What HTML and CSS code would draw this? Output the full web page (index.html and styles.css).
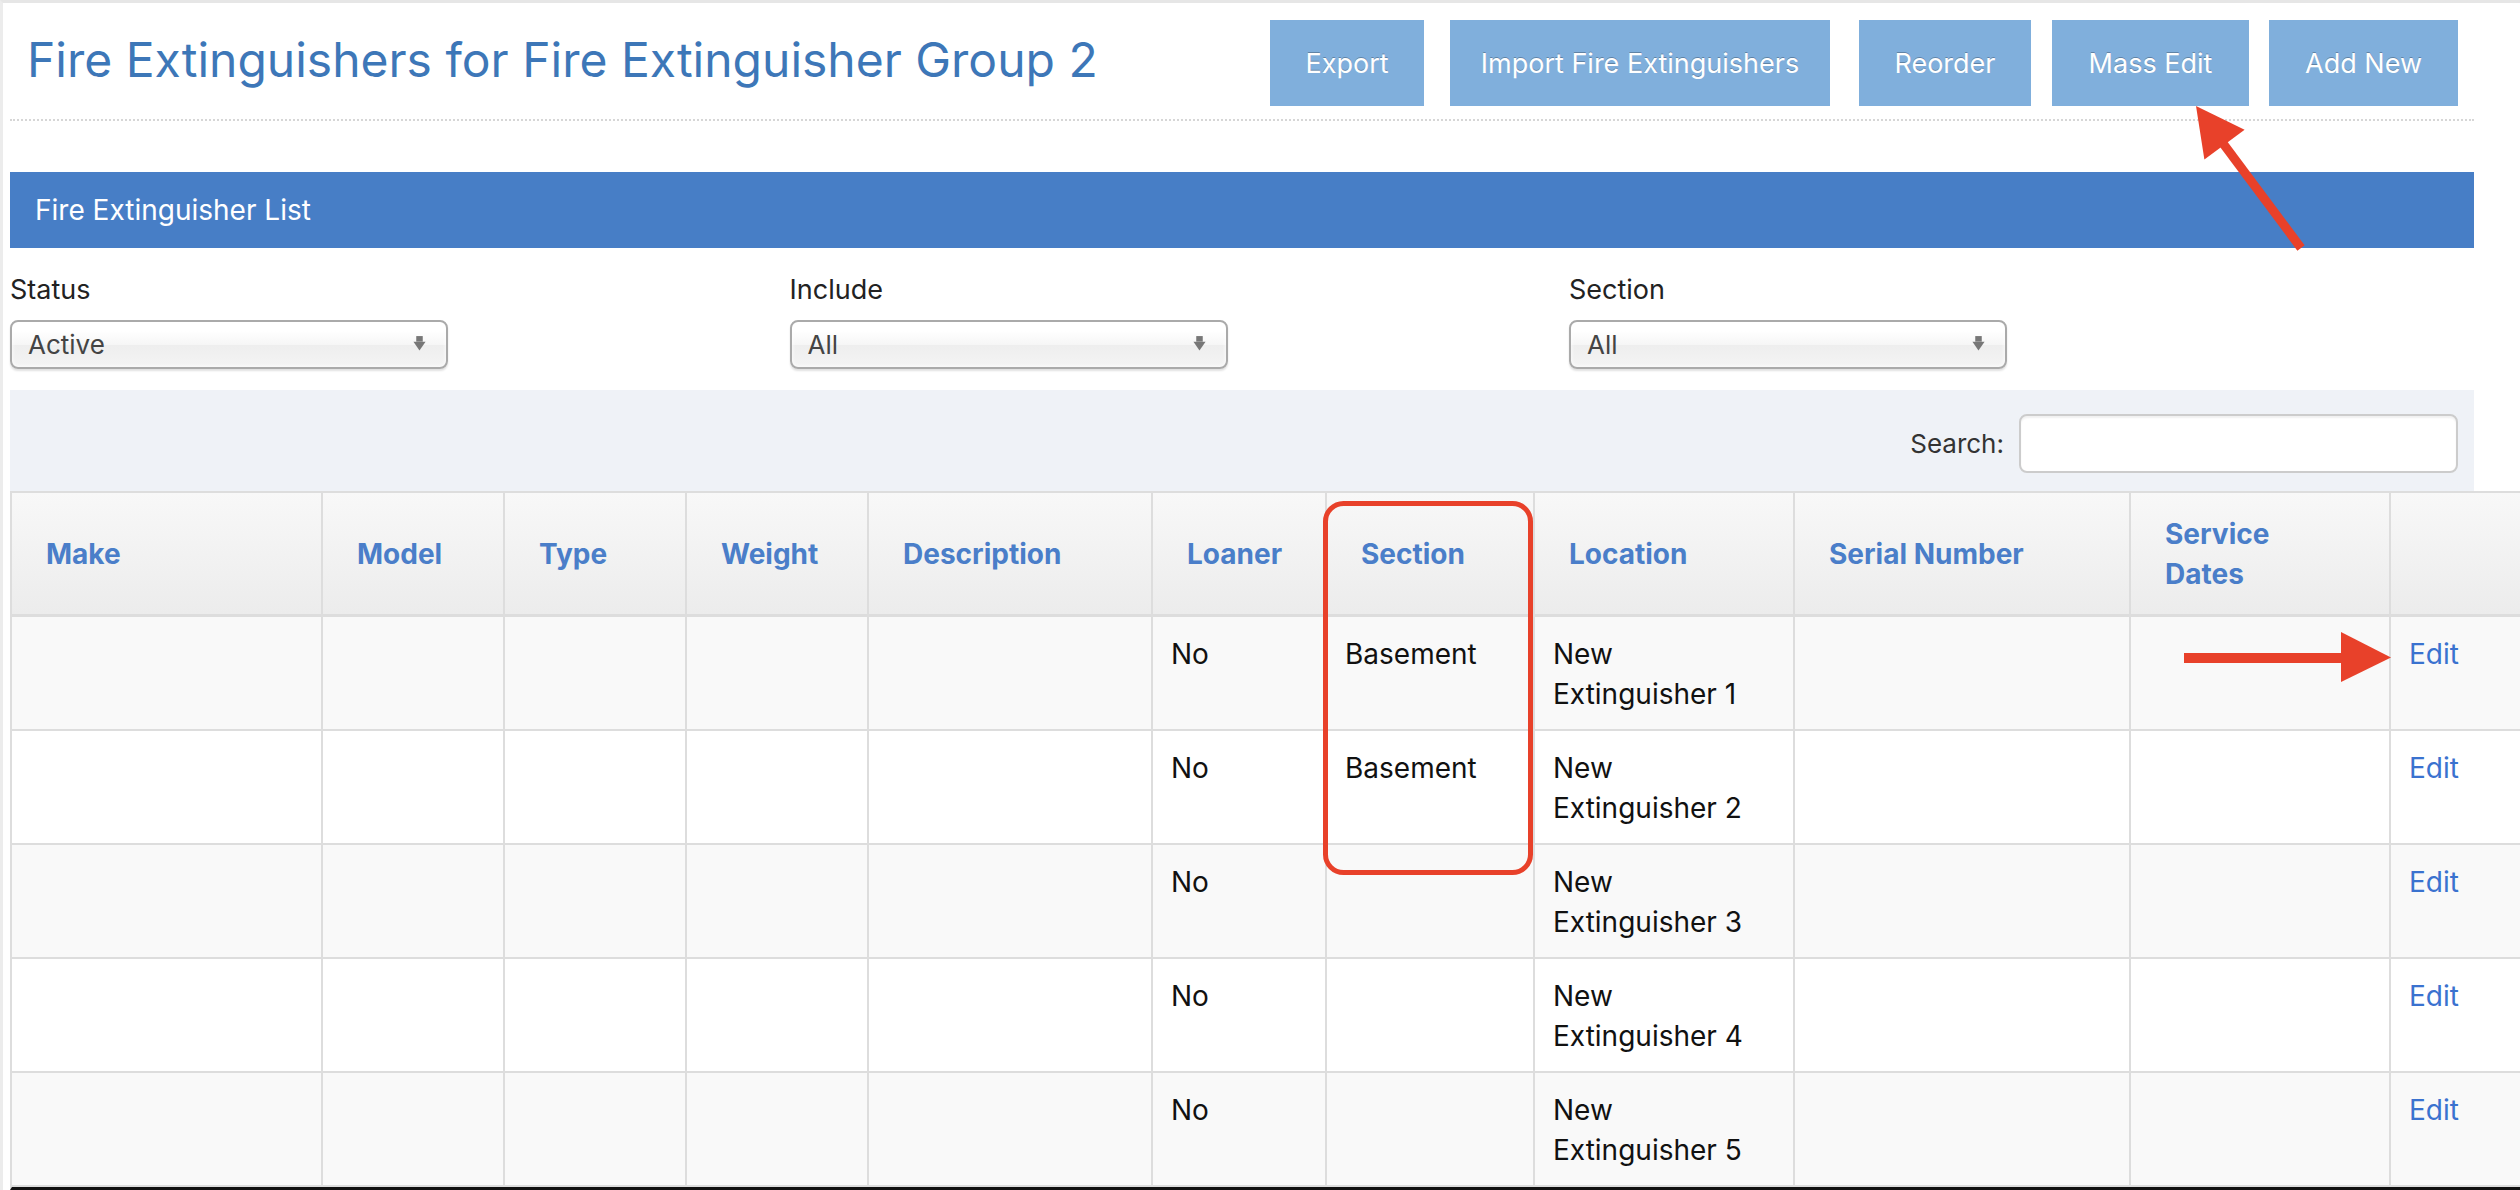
FILE: index.html
```html
<!DOCTYPE html>
<html lang="en">
<head>
<meta charset="utf-8">
<title>Fire Extinguishers</title>
<link rel="stylesheet" href="styles.css">
</head>
<body>
<div class="page">
  <header class="page-header">
    <h1 class="title">Fire Extinguishers for Fire Extinguisher Group 2</h1>
    <div class="actions">
      <a class="btn btn-export">Export</a>
      <a class="btn btn-import">Import Fire Extinguishers</a>
      <a class="btn btn-reorder">Reorder</a>
      <a class="btn btn-mass">Mass Edit</a>
      <a class="btn btn-add">Add New</a>
    </div>
  </header>

  <div class="panel-heading">Fire Extinguisher List</div>

  <div class="filters">
    <div class="filter">
      <label class="filter-label">Status</label>
      <div class="select"><span>Active</span><svg class="select-arrow" viewBox="0 0 14 16"><rect x="3.5" y="0" width="7" height="6" fill="#777"/><path d="M0.5 6 H13.5 L7 15.5 Z" fill="#777"/></svg></div>
    </div>
    <div class="filter">
      <label class="filter-label">Include</label>
      <div class="select"><span>All</span><svg class="select-arrow" viewBox="0 0 14 16"><rect x="3.5" y="0" width="7" height="6" fill="#777"/><path d="M0.5 6 H13.5 L7 15.5 Z" fill="#777"/></svg></div>
    </div>
    <div class="filter">
      <label class="filter-label">Section</label>
      <div class="select"><span>All</span><svg class="select-arrow" viewBox="0 0 14 16"><rect x="3.5" y="0" width="7" height="6" fill="#777"/><path d="M0.5 6 H13.5 L7 15.5 Z" fill="#777"/></svg></div>
    </div>
  </div>

  <div class="search-bar">
    <label class="search-label">Search:</label>
    <input class="search-input" type="text">
  </div>

  <table class="grid">
    <thead>
      <tr>
        <th class="c-make">Make</th>
        <th class="c-model">Model</th>
        <th class="c-type">Type</th>
        <th class="c-weight">Weight</th>
        <th class="c-desc">Description</th>
        <th class="c-loaner">Loaner</th>
        <th class="c-section">Section</th>
        <th class="c-location">Location</th>
        <th class="c-serial">Serial Number</th>
        <th class="c-service th-wrap">Service Dates</th>
        <th class="c-edit"></th>
      </tr>
    </thead>
    <tbody>
      <tr><td></td><td></td><td></td><td></td><td></td><td>No</td><td>Basement</td><td>New Extinguisher 1</td><td></td><td></td><td><a class="edit">Edit</a></td></tr>
      <tr><td></td><td></td><td></td><td></td><td></td><td>No</td><td>Basement</td><td>New Extinguisher 2</td><td></td><td></td><td><a class="edit">Edit</a></td></tr>
      <tr><td></td><td></td><td></td><td></td><td></td><td>No</td><td></td><td>New Extinguisher 3</td><td></td><td></td><td><a class="edit">Edit</a></td></tr>
      <tr><td></td><td></td><td></td><td></td><td></td><td>No</td><td></td><td>New Extinguisher 4</td><td></td><td></td><td><a class="edit">Edit</a></td></tr>
      <tr><td></td><td></td><td></td><td></td><td></td><td>No</td><td></td><td>New Extinguisher 5</td><td></td><td></td><td><a class="edit">Edit</a></td></tr>
    </tbody>
  </table>
</div>

<svg class="annotations" width="2520" height="1190" viewBox="0 0 2520 1190">
  <rect x="1325.5" y="503.5" width="205" height="369" rx="18" ry="18" fill="none" stroke="#e8412a" stroke-width="5"/>
  <line x1="2222" y1="142" x2="2301" y2="248" stroke="#e8412a" stroke-width="9"/>
  <polygon points="2196,106 2244.6,129.8 2204.4,159.5" fill="#e8412a"/>
  <rect x="2184" y="653" width="160" height="10" fill="#e8412a"/>
  <polygon points="2341,632 2391,657.5 2341,682" fill="#e8412a"/>
</svg>
</body>
</html>
```

FILE: styles.css
```css
* { box-sizing: border-box; }

html, body {
  margin: 0;
  padding: 0;
  overflow: hidden;
}

body {
  width: 2520px;
  height: 1190px;
  font-family: Inter, "Noto Sans", "Liberation Sans", sans-serif;
  color: #111;
  background: #fff;
  border-top: 3px solid #e6e6e6;
  border-left: 3px solid #ececec;
}

.page {
  width: 2471px;
  padding-left: 7px;
}

/* ---------- header ---------- */
.page-header {
  display: flex;
  justify-content: space-between;
  align-items: flex-start;
  padding-top: 17px;
  padding-bottom: 13px;
  border-bottom: 2px dotted #d6d6d6;
}

.title {
  margin: 16px 0 0 17px;
  font-size: 48px;
  line-height: 48px;
  font-weight: 400;
  color: #3d77b8;
}

.actions {
  display: flex;
  margin-right: 16px;
}

.btn {
  display: flex;
  align-items: center;
  justify-content: center;
  height: 86px;
  padding: 0;
  background: #80afdc;
  color: #fff;
  font-size: 27px;
  text-shadow: 0 -1px 0 rgba(0, 0, 0, 0.25);
  white-space: nowrap;
}

.btn-export { width: 154px; }
.btn-import { width: 380px; margin-left: 26px; }
.btn-reorder { width: 172px; margin-left: 29px; }
.btn-mass { width: 197px; margin-left: 21px; }
.btn-add { width: 189px; margin-left: 20px; }

/* ---------- panel heading ---------- */
.panel-heading {
  margin-top: 51px;
  height: 76px;
  display: flex;
  align-items: center;
  padding-left: 25px;
  background: #477ec6;
  color: #fff;
  font-size: 28px;
}

/* ---------- filters ---------- */
.filters {
  display: grid;
  grid-template-columns: repeat(3, 779.5px);
  padding-top: 24px;
}

.filter-label {
  display: block;
  font-size: 27px;
  line-height: 36px;
  color: #222;
  margin-bottom: 12px;
}

.select {
  width: 438px;
  height: 49px;
  display: flex;
  align-items: center;
  justify-content: space-between;
  padding: 0 20px 0 16px;
  border: 2px solid #aaa;
  border-radius: 8px;
  background: linear-gradient(#ffffff 20%, #f6f6f6 50%, #eeeeee 52%, #f4f4f4 100%);
  box-shadow: inset 0 0 4px #fff, 0 2px 2px rgba(0, 0, 0, 0.12);
  font-size: 26px;
  color: #444;
}

.select-arrow {
  width: 13px;
  height: 15px;
  margin-top: -2px;
}

/* ---------- search bar ---------- */
.search-bar {
  margin-top: 21px;
  height: 101px;
  display: flex;
  justify-content: flex-end;
  align-items: center;
  gap: 15px;
  padding: 6px 16px 0 0;
  background: #eff2f7;
}

.search-label {
  font-size: 26px;
  color: #333;
}

.search-input {
  width: 439px;
  height: 59px;
  border: 2px solid #ccc;
  border-radius: 8px;
  background: #fff;
  box-shadow: inset 0 2px 2px rgba(0, 0, 0, 0.06);
  outline: none;
}

/* ---------- table ---------- */
.grid {
  border-collapse: separate;
  border-spacing: 0;
  table-layout: fixed;
  width: 2541px;
  border-top: 2px solid #ddd;
  border-left: 2px solid #ddd;
  border-bottom: 3px solid #111;
}

.grid th {
  padding: 21px 20px 20px 34px;
  background: linear-gradient(#f8f8f8, #ececec);
  color: #4a7ec9;
  font-weight: 700;
  font-size: 28px;
  line-height: 40px;
  text-align: left;
  vertical-align: middle;
  border-right: 2px solid #ddd;
  border-bottom: 3px solid #ddd;
}

.grid th.th-wrap { padding-right: 60px; }

.grid td {
  padding: 17px 18px 15px;
  font-size: 28px;
  line-height: 40px;
  vertical-align: top;
  color: #111;
  border-right: 2px solid #ddd;
  border-bottom: 2px solid #ddd;
  background: #fff;
}

.grid tbody tr:nth-child(odd) td { background: #f9f9f9; }

.c-make { width: 311px; }
.c-model, .c-type, .c-weight { width: 182px; }
.c-desc { width: 284px; }
.c-loaner { width: 174px; }
.c-section { width: 208px; }
.c-location { width: 260px; }
.c-serial { width: 336px; }
.c-service { width: 260px; }
.c-edit { width: 160px; }

.edit {
  color: #3a72cf;
  text-decoration: none;
}

/* ---------- annotations overlay ---------- */
.annotations {
  position: absolute;
  top: 0;
  left: 0;
  pointer-events: none;
}
```
